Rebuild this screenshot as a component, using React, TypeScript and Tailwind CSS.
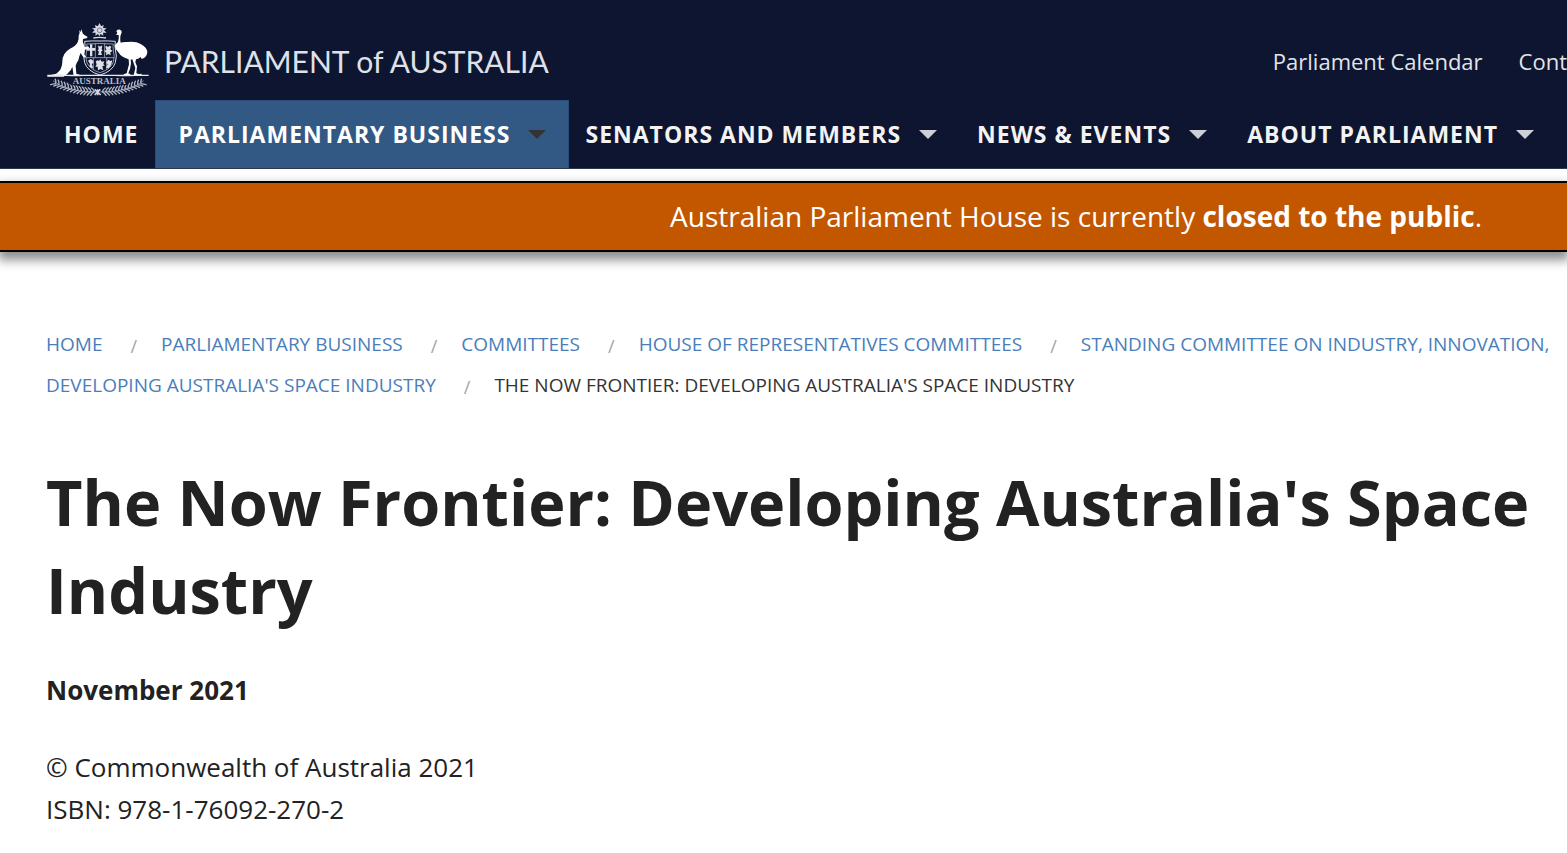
const menu = [
  { label: "SENATORS AND MEMBERS" },
  { label: "NEWS & EVENTS" },
  { label: "ABOUT PARLIAMENT" },
];

const trail = [
  "HOME",
  "PARLIAMENTARY BUSINESS",
  "COMMITTEES",
  "HOUSE OF REPRESENTATIVES COMMITTEES",
];

const leaves = Array.from({ length: 13 }, (_, i) => {
  const t = i / 12;
  return { x: 46 + t * 116, y: 205 + 24 * Math.sin((t * Math.PI) / 2), a: 35 - t * 35 };
});

function Branch() {
  return (
    <g fill="none" stroke="#b3b8c6" strokeLinecap="round">
      <path d="M40 197Q78 229 168 230" strokeWidth="2" />
      {leaves.map((l) => (
        <path
          key={l.x}
          d="M-8 -11Q-2 -8 1 0Q-6 4 -10 11"
          transform={`translate(${l.x} ${l.y}) rotate(${l.a})`}
          strokeWidth="4"
        />
      ))}
    </g>
  );
}

function Crest() {
  return (
    <svg viewBox="18 20 312 222" className="h-[74px] w-[104px] shrink-0" role="img" aria-label="Coat of arms">
      <path
        fill="#d5d8e1"
        d="M179 23l4 10 8-4-2 9 11 1-8 6 8 7-11 0 1 9-8-5-4 7-4-7-8 5 1-9-11 0 8-7-8-6 11-1-2-9 8 4z"
      />
      <circle cx="179" cy="45" r="7" fill="none" stroke="#4a5067" strokeWidth="2" />
      <path d="M160 68Q179 64 198 68" fill="none" stroke="#d5d8e1" strokeWidth="4" />
      <path
        fill="none"
        stroke="#dcdfe8"
        strokeWidth="3"
        d="M134 78Q157 76 180 77Q203 76 226 78Q224 91 226 101Q232 123 226 142Q218 168 180 179Q142 168 134 142Q128 123 134 101Q136 91 134 78z"
      />
      <path
        fill="none"
        stroke="#a5acbd"
        strokeWidth="2.5"
        d="M140 86Q180 83 220 86Q218 95 220 104Q225 124 220 140Q212 162 180 172Q148 162 140 140Q135 124 140 104Q142 95 140 86zM137 127H223M166 84V127M194 84V127M160 127V164M200 127V164"
      />
      <g fill="#dcdfe6">
        <path d="M150 87h7v11h9v8h-9v17h-7v-17h-10v-8h10z" />
        <path d="M174 91h3l3 3 3-3h4l-2 10 3 5-5 3 3 10h-12l3-10-4-3 3-5z" />
        <path d="M199 91l5 4 5-4 5 3-3 8 7 5-7 4 1 9-7-4-7 4 1-8-6-5 6-4-3-9z" />
        <path d="M144 136l8-5 8 5v6l-5 5 5 10-7 1-5-7 2-5z" />
        <path d="M167 139q5-8 10-2l4-5 4 7 8-1-3 8 4 5-7 1 3 13-8-4-8 4-1-11-7 0 4-7z" />
        <path d="M205 133l7 4 5-2-2 9-3 7-6 8-8-2 5-10-5-5z" />
      </g>
      <path
        fill="#fff"
        d="M117 43l4 8 3-9 4 12 4 4 10 6q2 3-3 5l-10 2q-2 8 2 15l3 10 10-3 4 4-6 4-9 3-1 13 6 7-3 3-7-4-6-10-4 10q-1 12-8 20l-3 8 2 24 12 4v3h-20l-4-28-4 9q-11 14-22 21H22v-3l27-6q18-13 18-36Q67 113 90 100Q108 92 113 81Q117 69 116 62Q117 56 119 54z"
      />
      <path
        fill="#fff"
        d="M229 47q4-5 11-4 6 2 5 8-2 6-4 12-1 12 1 19Q249 79 263 80Q287 77 302 86Q320 96 322 109Q322 120 312 128L305 131L302 125Q294 132 288 132L286 141L291 153L289 174L298 177V180H281L286 158L279 138L277 132L272 133L273 144L270 161L265 174L271 177V180H251V177L260 174L267 147L266 132Q244 126 235 111Q225 101 224 91Q228 85 234 80Q238 69 236 59L228 58L232 53z"
      />
      <path d="M22 180H326M48 177Q90 183 130 180M226 180Q276 183 305 177" fill="none" stroke="#e8eaf0" strokeWidth="4" />
      <Branch />
      <g transform="translate(350 0) scale(-1 1)">
        <Branch />
      </g>
      <path d="M164 222l9 8 8-8M164 239l9-9 9 9M173 222v18" fill="none" stroke="#d3d6df" strokeWidth="5" />
      <path d="M82 187H273L264 210H92z" fill="#0d1530" />
      <text x="178" y="207" textAnchor="middle" fontSize="27" fontWeight="700" fill="#b9bdca" className="font-['Liberation_Serif',serif]">
        AUSTRALIA
      </text>
    </svg>
  );
}

function Caret({ className }: { className: string }) {
  return (
    <svg viewBox="0 0 18 9" aria-hidden="true" className={`h-[9px] w-[18px] ${className}`}>
      <path d="M0 0h18l-9 9z" fill="currentColor" />
    </svg>
  );
}

function Slash() {
  return (
    <span aria-hidden="true" className="mr-6 ml-7 pt-1 text-[18px] leading-[36px] text-[#a5a5a5]">
      /
    </span>
  );
}

export default function App() {
  return (
    <div className="min-h-screen overflow-hidden bg-white font-['Open_Sans',sans-serif] text-[#222]">
      <header className="border-b border-[#30364e] bg-[#0d1530] whitespace-nowrap">
        <div className="flex h-[100px] items-end pb-1 pl-[46px]">
          <a href="#" className="flex items-center gap-[14px]">
            <Crest />
            <span className="pt-1 font-['Lato',sans-serif] text-[30px] leading-10 text-[#dfe1e8]">
              PARLIAMENT of AUSTRALIA
            </span>
          </a>
          <nav aria-label="Quick links" className="ml-auto flex gap-9 pb-[19px] text-[22px] leading-8 text-[#e3e4e8]">
            <a href="#">Parliament Calendar</a>
            <a href="#">Cont</a>
          </nav>
        </div>
        <nav aria-label="Main" className="flex h-[68px] items-stretch pl-16 text-[23px] font-bold tracking-[1px] text-[#f3f3f3]">
          <a href="#" className="flex items-center pr-[17px]">HOME</a>
          <a href="#" className="flex items-center gap-[18px] border border-b-0 border-[#2a4b7c] bg-[#325983] px-[22px] text-white">
            PARLIAMENTARY BUSINESS
            <Caret className="text-[#333]" />
          </a>
          {menu.map((m) => (
            <a key={m.label} href="#" className="mr-6 flex items-center gap-[18px] pl-4">
              {m.label}
              <Caret className="text-[#cfd0d6]" />
            </a>
          ))}
        </nav>
      </header>

      <aside className="mt-3 flex h-[71px] items-center justify-end border-y-2 border-black bg-[#c25700] pr-[85px] pb-0.5 text-[28px] whitespace-nowrap text-white shadow-[0_6px_10px_2px_rgba(0,0,0,0.45)]">
        <p>
          Australian Parliament House is currently <strong>closed to the public</strong>.
        </p>
      </aside>

      <main className="px-[46px] pt-[72px]">
        <nav aria-label="Breadcrumb" className="text-[19px] leading-[41px] whitespace-nowrap text-[#4a7ebb]">
          <div className="flex">
            {trail.map((t) => (
              <span key={t} className="flex">
                <a href="#">{t}</a>
                <Slash />
              </span>
            ))}
            <a href="#">STANDING COMMITTEE ON INDUSTRY, INNOVATION,</a>
          </div>
          <div className="flex">
            <a href="#">DEVELOPING AUSTRALIA'S SPACE INDUSTRY</a>
            <Slash />
            <span aria-current="page" className="text-[#333]">
              THE NOW FRONTIER: DEVELOPING AUSTRALIA'S SPACE INDUSTRY
            </span>
          </div>
        </nav>
        <h1 className="-mr-10 mt-[52px] text-[63px] leading-[88px] font-bold">
          The Now Frontier: Developing Australia's Space Industry
        </h1>
        <p className="mt-[35px] text-[26px] leading-[42px] font-bold">November 2021</p>
        <p className="mt-[35px] text-[26px] leading-[42px]">
          © Commonwealth of Australia 2021
          <br />
          ISBN: 978-1-76092-270-2
        </p>
      </main>
    </div>
  );
}
